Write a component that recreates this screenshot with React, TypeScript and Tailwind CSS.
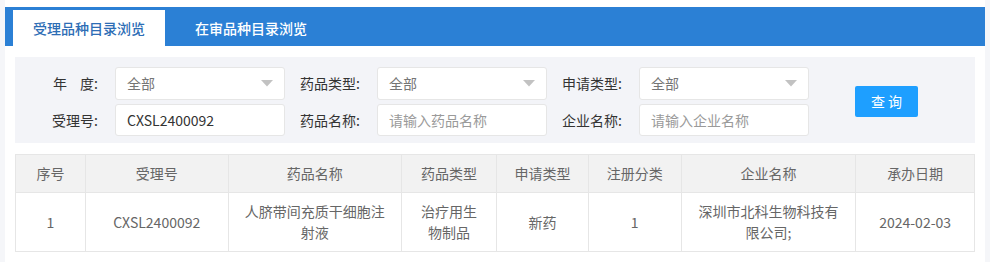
import React from 'react';

interface Row {
    no: string;
    acceptNo: string;
    drugName: string;
    drugType: string;
    applyType: string;
    regClass: string;
    company: string;
    date: string;
}

const columns = [
    { title: '序号', width: 'w-[70px]' },
    { title: '受理号', width: 'w-[143px]' },
    { title: '药品名称', width: 'w-[174px]' },
    { title: '药品类型', width: 'w-[95px]' },
    { title: '申请类型', width: 'w-[92px]' },
    { title: '注册分类', width: 'w-[93px]' },
    { title: '企业名称', width: 'w-[175px]' },
    { title: '承办日期', width: 'w-[118px]' },
];

const rows: Row[] = [
    {
        no: '1',
        acceptNo: 'CXSL2400092',
        drugName: '人脐带间充质干细胞注射液',
        drugType: '治疗用生物制品',
        applyType: '新药',
        regClass: '1',
        company: '深圳市北科生物科技有限公司;',
        date: '2024-02-03',
    },
];

const Caret = () => (
    <svg width="12" height="7" viewBox="0 0 12 7" className="shrink-0">
        <path d="M0 0 L12 0 L6 6.5 Z" fill="#c2c2c2" />
    </svg>
);

const SelectBox = ({ value }: { value: string }) => (
    <div className="flex items-center justify-between w-[170px] h-[33px] bg-white border border-[#e6e6e6] rounded-[3px] pl-[11px] pr-[11px] text-[14px] text-[#757575]">
        <span>{value}</span>
        <Caret />
    </div>
);

const InputBox = ({ value, placeholder }: { value?: string; placeholder?: string }) => (
    <div className="flex items-center w-[170px] h-[32px] bg-white border border-[#e6e6e6] rounded-[3px] pl-[11px] text-[14px]">
        {value ? <span className="text-[#333]">{value}</span> : <span className="text-[#9a9a9a]">{placeholder}</span>}
    </div>
);

const Label = ({ children }: { children: React.ReactNode }) => (
    <div className="w-[92px] pr-[17px] text-right text-[14px] text-[#333] shrink-0">{children}</div>
);

const App: React.FC = () => {
    const cell = (content: string, width: string, last: boolean) => (
        <div className={`${width} flex items-center justify-center px-[12px] text-center leading-[21px] ${last ? '' : 'border-r border-[#e6e6e6]'}`}>
            {content}
        </div>
    );

    return (
        <div className="w-[990px] h-[262px] bg-[#f5f6f9] overflow-hidden" style={{ fontFamily: '"Noto Sans CJK SC", "Noto Sans", sans-serif' }}>
            <div className="ml-[5px] w-[980px] h-full bg-white pt-[7px]">
                {/* tabs */}
                <div className="flex h-[39px] bg-[#2b80d5] pl-[8px] pt-[3px] gap-[10px]">
                    <div className="flex items-center px-[20px] bg-white text-[14px] text-[#2d6db5] font-medium">受理品种目录浏览</div>
                    <div className="flex items-center px-[20px] text-[14px] text-white font-medium">在审品种目录浏览</div>
                </div>

                <div className="px-[10px] pt-[11px]">
                    {/* filters */}
                    <div className="flex items-center bg-[#f3f4f8] pl-[8px] pt-[10px] pb-[7px]">
                        <div className="flex flex-col gap-[4px]">
                            <div className="flex items-center">
                                <Label>
                                    年<span className="inline-block w-[13px]" />度:
                                </Label>
                                <SelectBox value="全部" />
                                <Label>药品类型:</Label>
                                <SelectBox value="全部" />
                                <Label>申请类型:</Label>
                                <SelectBox value="全部" />
                            </div>
                            <div className="flex items-center">
                                <Label>受理号:</Label>
                                <InputBox value="CXSL2400092" />
                                <Label>药品名称:</Label>
                                <InputBox placeholder="请输入药品名称" />
                                <Label>企业名称:</Label>
                                <InputBox placeholder="请输入企业名称" />
                            </div>
                        </div>
                        <button className="ml-[46px] w-[63px] h-[31px] bg-[#1e9fff] rounded-[2px] text-white text-[14px] tracking-[3px] pl-[3px]">查询</button>
                    </div>

                    {/* table */}
                    <div className="mt-[11px] border border-[#e6e6e6] text-[14px] text-[#666]">
                        <div className="flex h-[38px] bg-[#f2f2f2] border-b border-[#e6e6e6]">
                            {columns.map((c, i) => cell(c.title, c.width, i === columns.length - 1))}
                        </div>
                        {rows.map((r) => {
                            const values = [r.no, r.acceptNo, r.drugName, r.drugType, r.applyType, r.regClass, r.company, r.date];
                            return (
                                <div key={r.no} className="flex h-[58px]">
                                    {values.map((v, i) => cell(v, columns[i].width, i === values.length - 1))}
                                </div>
                            );
                        })}
                    </div>
                </div>
            </div>
        </div>
    );
};

export default App;
